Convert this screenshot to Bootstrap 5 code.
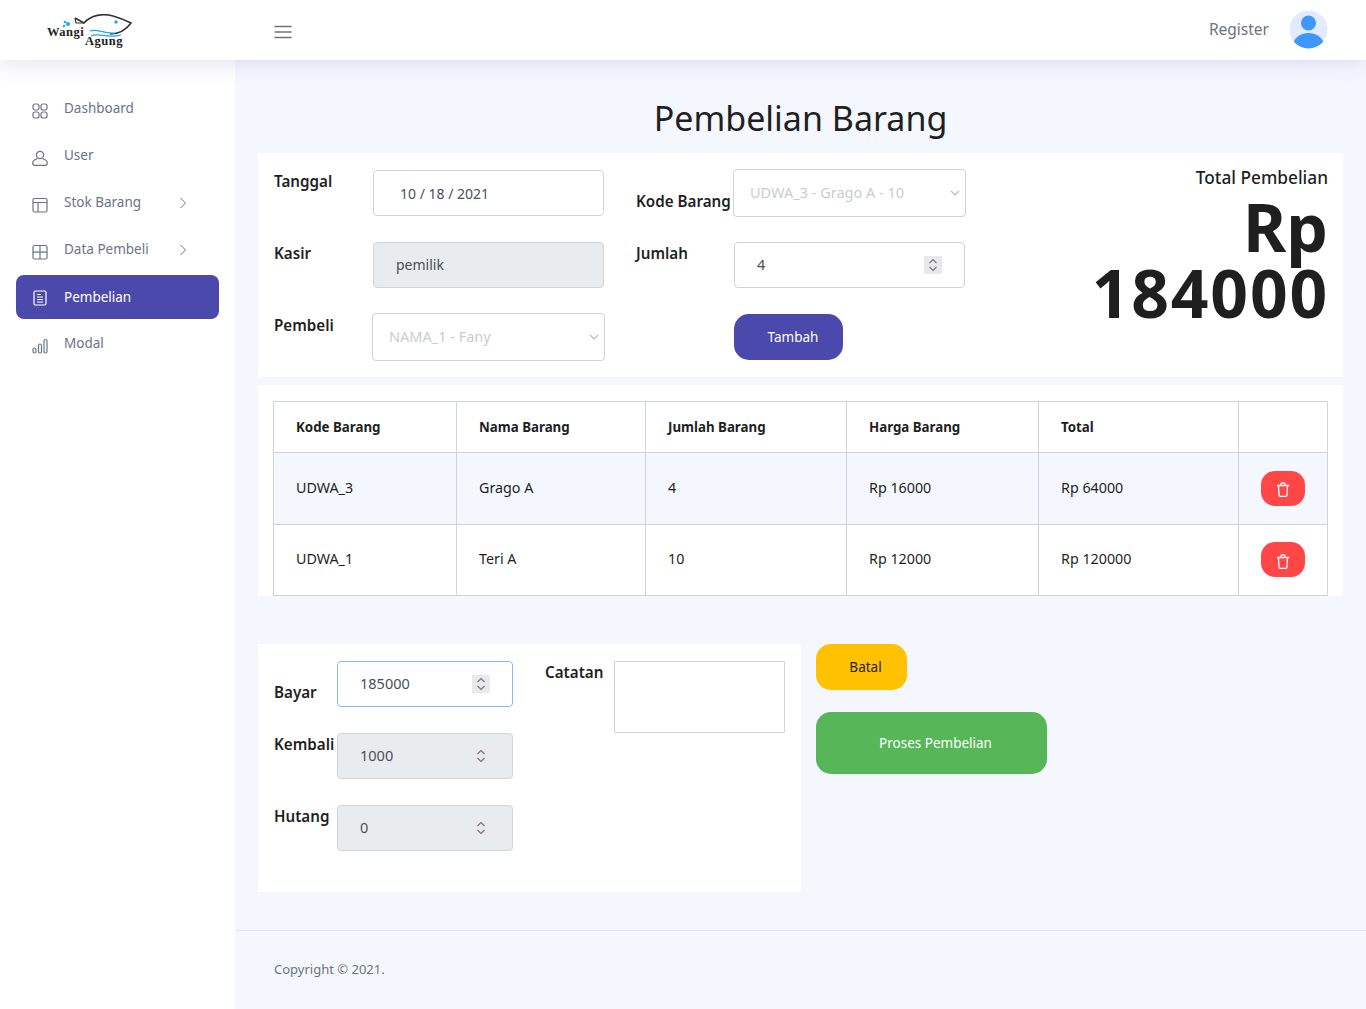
<!DOCTYPE html>
<html lang="en">
    <head>
        <meta charset="UTF-8" />
        <meta name="viewport" content="width=device-width, initial-scale=1.0" />
        <title>Pembelian Barang</title>
        <link href="https://cdn.jsdelivr.net/npm/bootstrap@5.3.0/dist/css/bootstrap.min.css" rel="stylesheet" />
        <style>
            body {
                font-family: "Noto Sans", "Open Sans", sans-serif;
                background-color: #f5f7ff;
                color: #1f1f1f;
                font-size: 14px;
                min-height: 1009px;
            }
            .top-bar {
                height: 60px;
                background: #fff;
                box-shadow: 0 0 26px rgba(90, 90, 150, 0.22);
                position: relative;
                z-index: 2;
                padding: 0 38px 0 47px;
            }
            .brand-box { width: 227px; }
            .burger { width: 18px; height: 14px; margin-top: 4px; }
            .reg-link { color: #6c7383; font-size: 15.5px; margin-right: 20px; margin-top: -1px; text-decoration: none; }
            .avatar-pic { margin-top: -2px; }
            .shell { min-height: 949px; }
            .side-menu {
                width: 235px;
                flex: none;
                background: #fff;
                padding: 27px 16px 0;
            }
            .side-item {
                height: 44px;
                margin-bottom: 3px;
                padding: 0 16px;
                border-radius: 8px;
                color: #6c7383;
                font-size: 13.5px;
                text-decoration: none;
            }
            .side-item svg.ico { width: 16px; height: 16px; margin-right: 16px; margin-top: 4px; flex: none; }
            .side-item span { margin-top: -1px; }
            .side-item svg.chev { width: 8px; height: 12px; margin-left: auto; margin-right: 16px; }
            .side-item.is-on { background: #4b49ac; color: #fff; }
            .side-item.is-on span { margin-top: 1px; }
            .side-item.is-on svg.ico { margin-top: 1px; }
            .page-body { min-width: 0; }
            .content-wrap { padding: 36px 23px 0; flex: 1; }
            .page-title { font-size: 34px; line-height: 45px; margin: 0 0 12px; text-align: center; font-weight: 400; }
            .panel-white { background: #fff; }
            .top-form { height: 224px; padding: 17px 15px 0 16px; margin-bottom: 8px; }
            .form-grid { display: grid; grid-template-columns: 99px 231px; row-gap: 26px; align-content: start; }
            .form-grid.second { grid-template-columns: 98px 231px; margin-left: 32px; }
            .field-label { font-weight: 600; font-size: 15.2px; line-height: 22px; white-space: nowrap; }
            .label-low { margin-top: 20px; }
            .form-control, .form-select {
                border-color: #ced4da;
                border-radius: 4px;
                font-size: 14px;
                height: 46px;
                color: #495057;
            }
            .form-control { padding-left: 22px; }
            .form-control:disabled { background-color: #e9ecef; padding-top: 5px; padding-bottom: 7px; }
            .form-select {
                height: 48px;
                padding-left: 16px;
                margin: -1px 0 -1px -1px;
                width: calc(100% + 2px);
                font-size: 14.5px;
                background-size: 10px 6px;
                background-position: right 5px center;
                background-image: url("data:image/svg+xml,%3csvg xmlns='http://www.w3.org/2000/svg' viewBox='0 0 10 6'%3e%3cpath fill='none' stroke='%23b9bcc4' stroke-width='1.200' d='M1 1l4 4 4-4'/%3e%3c/svg%3e");
            }
            .form-select:disabled { background-color: #fff; color: #c9ccd3; }
            input[type="number"] { font-size: 14.5px; padding-right: 22px; padding-top: 5px; padding-bottom: 7px; }
            input[type="number"]::-webkit-inner-spin-button {
                -webkit-appearance: none;
                opacity: 1;
                width: 18px;
                height: 18px;
                margin-top: 2px;
                background: #e8e8ed url("data:image/svg+xml,%3csvg xmlns='http://www.w3.org/2000/svg' viewBox='0 0 18 18'%3e%3cpath fill='none' stroke='%23777' stroke-width='1.200' d='M5.500 7l3.500-3.500L12.500 7M5.500 11l3.500 3.500 3.500-3.500'/%3e%3c/svg%3e") center no-repeat;
            }
            input[type="number"]:disabled::-webkit-inner-spin-button { background-color: #e9e9ee; }
            input.date-in { padding-left: 26px; }
            .total-box { margin-left: auto; text-align: right; width: 260px; }
            .total-head { font-size: 17.300px; line-height: 20px; font-weight: 500; margin-top: -2px; }
            .total-num { font-size: 66px; line-height: 66px; font-weight: 700; margin-top: 5px; }
            .total-digits { letter-spacing: 1.800px; margin-right: -1px; }
            .btn-add, .btn-stop, .btn-go { color: #fff; border: 0; font-size: 13.5px; }
            .btn-add { width: 109px; height: 46px; background: #4b49ac; border-radius: 15px; padding: 0 0 0 9px; }
            .table-panel { padding: 16px 15px 0; height: 211px; }
            .buy-table { margin: 0; border-color: #ced4da; table-layout: fixed; width: 1054px; }
            .buy-table th, .buy-table td { padding: 0 0 2px 22px; vertical-align: middle; font-size: 14.300px; color: #1f1f1f; background: transparent; }
            .buy-table td:last-child { padding-bottom: 0; }
            .buy-table thead tr { height: 51px; }
            .buy-table thead th { font-weight: 700; font-size: 13.300px; padding: 2px 0 0 22px; }
            .buy-table tbody tr { height: 71.5px; }
            .buy-table tbody tr.tint td { background: #f5f7ff; box-shadow: none; }
            .btn-del { width: 44px; height: 35px; background: #ff4747; border-radius: 14px; border: 0; padding: 0; }
            .btn-del svg { width: 14px; height: 15px; }
            .lower-wrap { margin-top: 48px; }
            .pay-panel { width: 543px; height: 248px; padding: 17px 16px 0; }
            .pay-grid { display: grid; grid-template-columns: 63px 176px; row-gap: 26px; align-content: start; }
            .pay-grid .form-control.is-live { border-color: #86b7fe; }
            .note-col { margin-left: 32px; width: 240px; align-items: flex-start; }
            .note-col label { width: 69px; flex: none; }
            .note-col textarea { height: 72px; width: 171px; border-radius: 1px; resize: none; }
            .act-col { margin-left: 15px; width: 231px; }
            .btn-stop { width: 91px; height: 46px; background: #ffc100; border-radius: 15px; color: #1f1f1f; padding: 0 0 0 8px; }
            .btn-go { width: 231px; height: 62px; margin-top: 22px; background: #57b657; border-radius: 15px; padding: 0 0 0 8px; }
            .foot-bar { border-top: 1px solid #e3e5ee; height: 79px; margin-top: 38px; padding: 29px 39px 0; color: #6c7383; font-size: 13px; }
        </style>
    </head>
    <body>
        <nav class="top-bar d-flex align-items-center">
            <div class="brand-box">
                <svg width="88" height="38" viewBox="0 0 88 38" style="margin-top: 6px">
                    <path d="M28 4 L37 9 C44 1 56 -1 66 2 C73 4 80 7 84 9 C79 16 72 20 63 20" fill="none" stroke="#333" stroke-width="1.600" />
                    <path d="M28 4 L29 9 L37 9" fill="none" stroke="#333" stroke-width="1.200" />
                    <circle cx="69" cy="8" r="1.700" fill="#1ea7e8" />
                    <path d="M43 17 C50 14 56 20 68 19 M44 22 C52 18 60 25 74 21" fill="none" stroke="#1ea7e8" stroke-width="1.200" />
                    <circle cx="21" cy="10" r="2" fill="#1ea7e8" /><circle cx="18" cy="8" r="1.300" fill="#1ea7e8" /><circle cx="17" cy="12" r="1.200" fill="#1ea7e8" />
                    <text x="0" y="22" font-family="Liberation Serif, serif" font-size="12.500" font-weight="700" letter-spacing=".5" fill="#222">Wangi</text>
                    <text x="38" y="31" font-family="Liberation Serif, serif" font-size="12.500" font-weight="700" letter-spacing=".5" fill="#222">Agung</text>
                </svg>
            </div>
            <svg class="burger" viewBox="0 0 18 14"><path d="M1 1.500h16M1 7h16M1 12.500h16" stroke="#6c7383" stroke-width="1.500" stroke-linecap="round" /></svg>
            <div class="ms-auto d-flex align-items-center">
                <a class="reg-link" href="#">Register</a>
                <svg class="avatar-pic" width="39" height="39" viewBox="0 0 39 39">
                    <defs><clipPath id="av"><circle cx="19.500" cy="19.500" r="19" /></clipPath></defs>
                    <circle cx="19.500" cy="19.500" r="19" fill="#e4eafd" />
                    <g clip-path="url(#av)"><circle cx="19.500" cy="13" r="7.500" fill="#3f96ff" /><ellipse cx="19.500" cy="37" rx="16" ry="14" fill="#3f96ff" /></g>
                </svg>
            </div>
        </nav>
        <div class="shell d-flex">
            <aside class="side-menu">
                <a class="side-item d-flex align-items-center" href="#">
                    <svg class="ico" viewBox="0 0 16 16" fill="none" stroke="#6c7383" stroke-width="1.200"><rect x="1" y="1" width="6" height="6" rx="2" /><rect x="9" y="1" width="6" height="6" rx="2" /><rect x="1" y="9" width="6" height="6" rx="2" /><rect x="9" y="9" width="6" height="6" rx="2" /></svg>
                    <span>Dashboard</span>
                </a>
                <a class="side-item d-flex align-items-center" href="#">
                    <svg class="ico" viewBox="0 0 16 16" fill="none" stroke="#6c7383" stroke-width="1.200"><circle cx="8" cy="5" r="3.600" /><path d="M5.500 8.500C3 9.500 .7 10.500 .7 13c0 1.500 1 2.300 2.300 2.300h10c1.300 0 2.300-.8 2.300-2.300 0-2.500-2.300-3.500-4.800-4.500" /></svg>
                    <span>User</span>
                </a>
                <a class="side-item d-flex align-items-center" href="#">
                    <svg class="ico" viewBox="0 0 16 16" fill="none" stroke="#6c7383" stroke-width="1.200"><rect x="1" y="1.500" width="14" height="13.500" rx="1.500" /><path d="M1 5.500h14M6 5.500v9.500" /></svg>
                    <span>Stok Barang</span>
                    <svg class="chev" viewBox="0 0 8 12" fill="none" stroke="#6c7383" stroke-width="1"><path d="M1.500 1l5 5-5 5" /></svg>
                </a>
                <a class="side-item d-flex align-items-center" href="#">
                    <svg class="ico" viewBox="0 0 16 16" fill="none" stroke="#6c7383" stroke-width="1.200"><rect x="1" y="1.500" width="14" height="13.500" rx="1.500" /><path d="M1 8.200h14M8 1.500v13.500" /></svg>
                    <span>Data Pembeli</span>
                    <svg class="chev" viewBox="0 0 8 12" fill="none" stroke="#6c7383" stroke-width="1"><path d="M1.500 1l5 5-5 5" /></svg>
                </a>
                <a class="side-item is-on d-flex align-items-center" href="#">
                    <svg class="ico" viewBox="0 0 16 16" fill="none" stroke="#fff" stroke-width="1.200"><rect x="2" y="1" width="12" height="14" rx="1.500" /><path d="M5 4.500h4M5 7h6M5 9.500h6M5 12h6" /></svg>
                    <span>Pembelian</span>
                </a>
                <a class="side-item d-flex align-items-center" href="#">
                    <svg class="ico" viewBox="0 0 16 16" fill="none" stroke="#6c7383" stroke-width="1.200"><rect x="1" y="10" width="3" height="5" rx="1.500" /><rect x="6.500" y="6" width="3" height="9" rx="1.500" /><rect x="12" y="1.500" width="3" height="13.500" rx="1.500" /></svg>
                    <span>Modal</span>
                </a>
            </aside>
            <main class="page-body flex-grow-1 d-flex flex-column">
                <div class="content-wrap">
                    <h1 class="page-title">Pembelian Barang</h1>
                    <section class="panel-white top-form d-flex">
                        <div class="form-grid">
                            <label class="field-label">Tanggal</label>
                            <input class="form-control date-in" type="text" value="10 / 18 / 2021" />
                            <label class="field-label">Kasir</label>
                            <input class="form-control" type="text" value="pemilik" disabled />
                            <label class="field-label">Pembeli</label>
                            <select class="form-select" disabled><option>NAMA_1 - Fany</option></select>
                        </div>
                        <div class="form-grid second">
                            <label class="field-label label-low">Kode Barang</label>
                            <select class="form-select" disabled><option>UDWA_3 - Grago A - 10</option></select>
                            <label class="field-label">Jumlah</label>
                            <input class="form-control" type="number" value="4" />
                            <div></div>
                            <div><button class="btn btn-add" type="button">Tambah</button></div>
                        </div>
                        <div class="total-box">
                            <div class="total-head">Total Pembelian</div>
                            <div class="total-num">Rp<br /><span class="total-digits">184000</span></div>
                        </div>
                    </section>
                    <section class="panel-white table-panel">
                        <table class="table table-bordered buy-table">
                            <colgroup>
                                <col style="width: 183px" /><col style="width: 189px" /><col style="width: 201px" /><col style="width: 192px" /><col style="width: 200px" /><col style="width: 89px" />
                            </colgroup>
                            <thead>
                                <tr><th>Kode Barang</th><th>Nama Barang</th><th>Jumlah Barang</th><th>Harga Barang</th><th>Total</th><th></th></tr>
                            </thead>
                            <tbody>
                                <tr class="tint">
                                    <td>UDWA_3</td><td>Grago A</td><td>4</td><td>Rp 16000</td><td>Rp 64000</td>
                                    <td><button class="btn-del" type="button"><svg viewBox="0 0 14 15" fill="none" stroke="#fff" stroke-width="1.300"><path d="M1 3.500h12M2.500 3.500l.5 9.500c0 .8.700 1.300 1.300 1.300h5.400c.6 0 1.300-.5 1.300-1.300l.5-9.500M5 3.500V2c0-.6.400-1 1-1h2c.6 0 1 .4 1 1v1.500" /></svg></button></td>
                                </tr>
                                <tr>
                                    <td>UDWA_1</td><td>Teri A</td><td>10</td><td>Rp 12000</td><td>Rp 120000</td>
                                    <td><button class="btn-del" type="button"><svg viewBox="0 0 14 15" fill="none" stroke="#fff" stroke-width="1.300"><path d="M1 3.500h12M2.500 3.500l.5 9.500c0 .8.700 1.300 1.300 1.300h5.400c.6 0 1.300-.5 1.300-1.300l.5-9.500M5 3.500V2c0-.6.400-1 1-1h2c.6 0 1 .4 1 1v1.500" /></svg></button></td>
                                </tr>
                            </tbody>
                        </table>
                    </section>
                    <div class="lower-wrap d-flex align-items-start">
                        <section class="panel-white pay-panel d-flex">
                            <div class="pay-grid">
                                <label class="field-label label-low">Bayar</label>
                                <input class="form-control is-live" type="number" value="185000" />
                                <label class="field-label">Kembali</label>
                                <input class="form-control" type="number" value="1000" disabled />
                                <label class="field-label">Hutang</label>
                                <input class="form-control" type="number" value="0" disabled />
                            </div>
                            <div class="note-col d-flex">
                                <label class="field-label">Catatan</label>
                                <textarea class="form-control"></textarea>
                            </div>
                        </section>
                        <div class="act-col">
                            <button class="btn btn-stop d-block" type="button">Batal</button>
                            <button class="btn btn-go d-block" type="button">Proses Pembelian</button>
                        </div>
                    </div>
                </div>
                <footer class="foot-bar">Copyright © 2021.</footer>
            </main>
        </div>
        <script src="https://cdn.jsdelivr.net/npm/bootstrap@5.3.0/dist/js/bootstrap.bundle.min.js"></script>
    </body>
</html>
